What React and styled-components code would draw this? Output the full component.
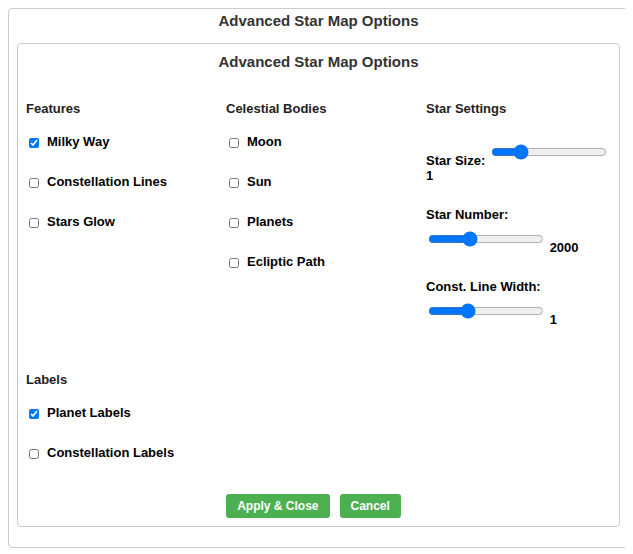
import React from 'react'
import styled, { createGlobalStyle } from 'styled-components'

const GlobalStyle = createGlobalStyle`
  body {
    margin: 8px;
    background: #fff;
    font-family: "Liberation Sans", Arial, sans-serif;
    color: #000;
  }
`

const Dialog = styled.div`
  box-sizing: border-box;
  width: 621px;
  height: 540px;
  border: 1px solid #ccc;
  border-radius: 4px;
  padding: 3px 8px 0;
  background: #fff;
`

const Title = styled.h3`
  margin: 0 0 13px;
  font-size: 15px;
  line-height: 18px;
  font-weight: bold;
  color: #333;
  text-align: center;
`

const Panel = styled.div`
  box-sizing: border-box;
  height: 484px;
  border: 1px solid #ccc;
  border-radius: 4px;
  padding: 9px 8px 8px;
  display: flex;
  flex-direction: column;
`

const Columns = styled.div`
  display: flex;
  margin-top: 17px;
  height: 271px;
`

const Column = styled.div`
  flex: ${(p) => (p.$grow ? '1 1 auto' : '0 0 200px')};
  min-width: 0;
`

const Heading = styled.h4`
  margin: 0 0 15px;
  font-size: 13px;
  line-height: 15px;
  font-weight: bold;
  color: #222;
`

const Row = styled.label`
  display: flex;
  align-items: center;
  height: 20px;
  margin-bottom: 20px;
  font-size: 13px;
  line-height: 15px;
  font-weight: bold;
  color: #000;
`

const Check = styled.input.attrs({ type: 'checkbox' })`
  width: 10px;
  height: 10px;
  margin: 3px 8px 0 3px;
  flex: none;
`

const Setting = styled.div`
  font-size: 13px;
  line-height: 15px;
  font-weight: bold;
  color: #000;
  margin-bottom: 24px;
  &:first-of-type {
    margin-top: 26px;
  }
`

const SettingLabel = styled.span`
  display: ${(p) => (p.$stacked ? 'block' : 'inline')};
  margin-bottom: ${(p) => (p.$stacked ? '7px' : '0')};
`

const Range = styled.input.attrs({ type: 'range' })`
  width: 116px;
  margin: 2px;
  vertical-align: 5px;
`

const Value = styled.span`
  font-weight: bold;
`

const Section = styled.div`
  margin-top: 0;
`

const Actions = styled.div`
  margin-top: auto;
  display: flex;
  justify-content: center;
`

const Button = styled.button`
  height: 24px;
  padding: 0 11px;
  margin-right: 10px;
  border: none;
  border-radius: 3px;
  background: #4caf50;
  color: #fff;
  font-family: "Liberation Sans", Arial, sans-serif;
  font-size: 12px;
  font-weight: bold;
  cursor: pointer;
`

function CheckRow({ label, checked }) {
  return (
    <Row>
      <Check defaultChecked={checked} />
      {label}
    </Row>
  )
}

function SliderSetting({ label, stacked, min, max, value, shown }) {
  return (
    <Setting>
      <SettingLabel $stacked={stacked}>{label}</SettingLabel>{' '}
      <Range min={min} max={max} step={1} defaultValue={value} />{' '}
      <Value>{shown}</Value>
    </Setting>
  )
}

export default function App() {
  return (
    <>
      <GlobalStyle />
      <Dialog>
        <Title>Advanced Star Map Options</Title>
        <Panel>
          <Title>Advanced Star Map Options</Title>
          <Columns>
            <Column>
              <Heading>Features</Heading>
              <CheckRow label="Milky Way" checked />
              <CheckRow label="Constellation Lines" />
              <CheckRow label="Stars Glow" />
            </Column>
            <Column>
              <Heading>Celestial Bodies</Heading>
              <CheckRow label="Moon" />
              <CheckRow label="Sun" />
              <CheckRow label="Planets" />
              <CheckRow label="Ecliptic Path" />
            </Column>
            <Column $grow>
              <Heading>Star Settings</Heading>
              <SliderSetting label="Star Size:" min={0} max={50} value={11} shown="1" />
              <SliderSetting label="Star Number:" stacked min={500} max={5000} value={2030} shown="2000" />
              <SliderSetting label="Const. Line Width:" stacked min={0} max={50} value={16} shown="1" />
            </Column>
          </Columns>
          <Section>
            <Heading>Labels</Heading>
            <CheckRow label="Planet Labels" checked />
            <CheckRow label="Constellation Labels" />
          </Section>
          <Actions>
            <Button>Apply &amp; Close</Button>
            <Button>Cancel</Button>
          </Actions>
        </Panel>
      </Dialog>
    </>
  )
}
